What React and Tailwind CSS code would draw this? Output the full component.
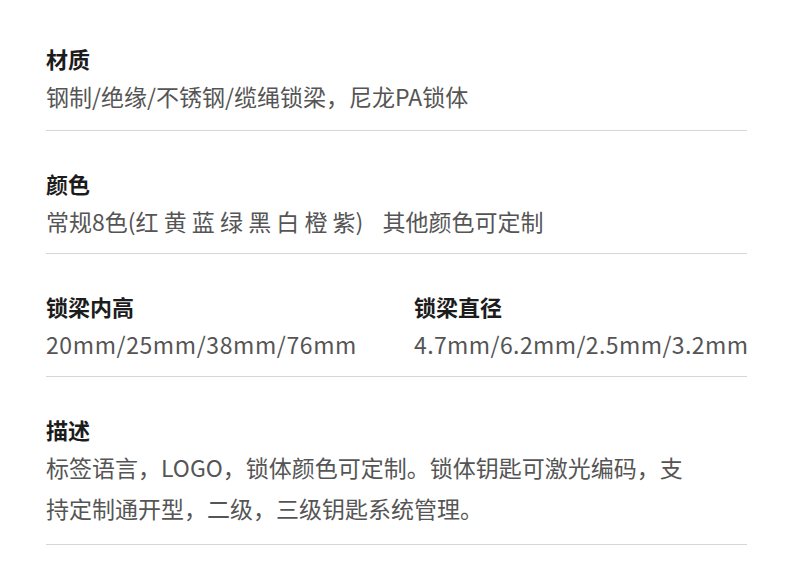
import React from 'react';

const font = { fontFamily: '"Noto Sans CJK SC", "Noto Sans", sans-serif' };

const specs = [
  { pb: 'pb-[13px]', cols: [{ label: '材质', value: '钢制/绝缘/不锈钢/缆绳锁梁，尼龙PA锁体' }] },
  {
    pb: 'pb-[11px]',
    cols: [
      {
        label: '颜色',
        value: (
          <>
            常规8色(红 黄 蓝 绿 黑 白 橙 紫)<span className="ml-[19px]">其他颜色可定制</span>
          </>
        )
      }
    ]
  },
  {
    pb: 'pb-[11px]',
    grid: true,
    cols: [
      { label: '锁梁内高', value: '20mm/25mm/38mm/76mm', track: 'tracking-[0.6px]' },
      { label: '锁梁直径', value: '4.7mm/6.2mm/2.5mm/3.2mm', track: 'tracking-[0.4px]' }
    ]
  },
  {
    pb: 'pb-[15px]',
    cols: [
      {
        label: '描述',
        value: ['标签语言，LOGO，锁体颜色可定制。锁体钥匙可激光编码，支', '持定制通开型，二级，三级钥匙系统管理。']
      }
    ]
  }
];

const Field = ({ label, value, track }) => (
  <div>
    <div className="text-[22px] leading-[22px] font-bold text-[#1c1c1c]">{label}</div>
    <div className={'mt-[7px] text-[23px] leading-[41px] text-[#555555] whitespace-nowrap ' + (track || '')}>
      {Array.isArray(value) ? value.map((line, i) => <div key={i}>{line}</div>) : value}
    </div>
  </div>
);

export default function App() {
  return (
    <div className="w-[790px] h-[578px] bg-white overflow-hidden" style={font}>
      <div className="ml-[46px] mr-[43px] pt-[6px]">
        {specs.map((row, i) => (
          <div
            key={i}
            className={
              (row.grid ? 'grid grid-cols-[368px_1fr] ' : '') +
              'pt-[41px] border-b border-[#d6d6d6] ' +
              row.pb
            }
          >
            {row.cols.map((c, j) => (
              <Field key={j} label={c.label} value={c.value} track={c.track} />
            ))}
          </div>
        ))}
      </div>
    </div>
  );
}
